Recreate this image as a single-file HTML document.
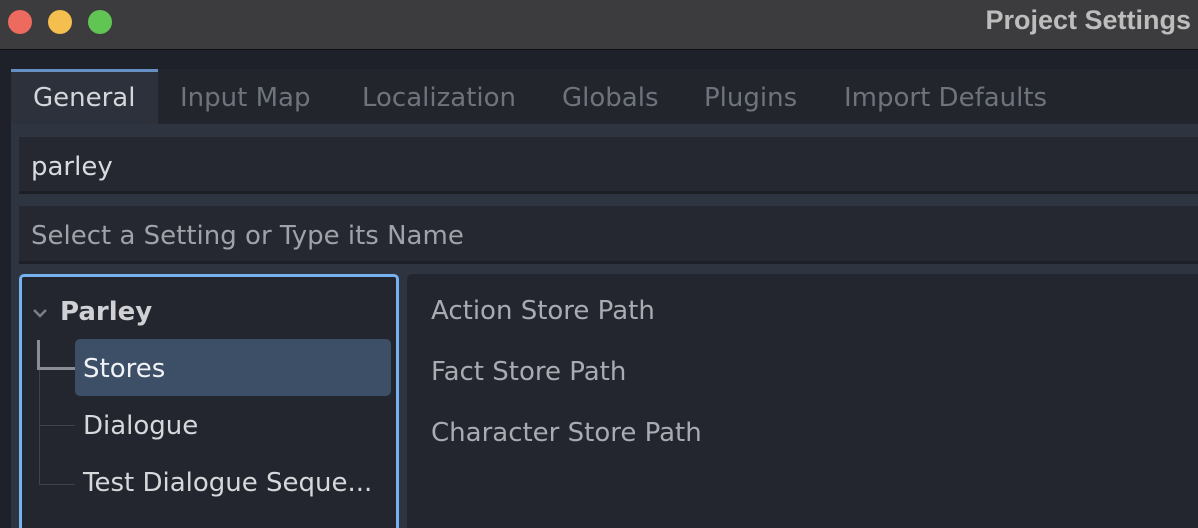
<!DOCTYPE html>
<html><head><meta charset="utf-8"><style>
*{margin:0;padding:0;box-sizing:border-box}
html,body{width:1198px;height:528px;overflow:hidden}
body{background:#1e2129;font-family:"DejaVu Sans","Liberation Sans",sans-serif;position:relative}
.tb{position:absolute;left:0;top:0;width:1198px;height:50px;background:#3c3c3e;border-bottom:1px solid #111}
.dot{position:absolute;top:10px;width:24px;height:24px;border-radius:50%}
.title{position:absolute;right:7px;top:5px;font:bold 27px "Liberation Sans",sans-serif;color:#bdbdbd}
.tabs{position:absolute;left:11px;top:69px;width:1187px;height:55px;background:#22252c}
.tab{position:absolute;top:0;height:55px;line-height:59px;font-size:26px;color:#6e737c;white-space:nowrap}
.tab.a{background:#2c313c;color:#d4d6da;border-top:3px solid #6690c4;line-height:53px;left:0;width:147px;padding-left:22px}
.panel{position:absolute;left:11px;top:124px;width:1187px;height:404px;background:#2e3440}
.f{position:absolute;left:8px;width:1179px;background:#252830;border-bottom:3px solid #1c1f25;font-size:26px;padding-left:12px}
.tree{position:absolute;left:19px;top:274px;width:380px;height:260px;background:#23262e;border:3px solid #76b1f0;border-radius:5px}
.right{position:absolute;left:407px;top:274px;width:800px;height:260px;background:#23262e;border-radius:5px}
.t{position:absolute;font-size:26px;color:#d6d8dc;white-space:nowrap}
.r{position:absolute;left:24px;font-size:26px;color:#a8abb1;white-space:nowrap}
.ln{position:absolute;background:#3e424a}
</style></head><body>
<div class="tb">
<div class="dot" style="left:8px;background:#ed6a5e"></div>
<div class="dot" style="left:48px;background:#f5bf4f"></div>
<div class="dot" style="left:88px;background:#61c554"></div>
<div class="title">Project Settings</div>
</div>
<div class="tabs">
<div class="tab a">General</div>
<div class="tab" style="left:169px">Input Map</div>
<div class="tab" style="left:351px">Localization</div>
<div class="tab" style="left:551px">Globals</div>
<div class="tab" style="left:693px">Plugins</div>
<div class="tab" style="left:833px">Import Defaults</div>
</div>
<div class="panel">
<div class="f" style="top:13px;height:57px;line-height:61px;color:#d8dade">parley</div>
<div class="f" style="top:82px;height:58px;line-height:61px;color:#9fa2a8">Select a Setting or Type its Name</div>
</div>
<div class="tree">
<svg style="position:absolute;left:10px;top:30px" width="16" height="12"><path d="M2 3l6 6 6-6" stroke="#7b7f86" stroke-width="2.5" fill="none"/></svg>
<div class="t" style="left:38px;top:20px;font-weight:bold;color:#cfd1d5">Parley</div>
<div class="ln" style="left:15px;top:63px;width:3px;height:30px;background:#8a8d93"></div>
<div class="ln" style="left:15px;top:90px;width:38px;height:3px;background:#8a8d93"></div>
<div class="ln" style="left:17px;top:93px;width:1px;height:115px"></div>
<div class="ln" style="left:17px;top:148px;width:36px;height:1px"></div>
<div class="ln" style="left:17px;top:207px;width:36px;height:1px"></div>
<div style="position:absolute;left:53px;top:62px;width:316px;height:57px;background:#3c4f66;border-radius:5px"></div>
<div class="t" style="left:61px;top:77px;color:#f0f2f5">Stores</div>
<div class="t" style="left:61px;top:134px">Dialogue</div>
<div class="t" style="left:61px;top:191px">Test Dialogue Seque...</div>
</div>
<div class="right">
<div class="r" style="top:22px">Action Store Path</div>
<div class="r" style="top:83px">Fact Store Path</div>
<div class="r" style="top:144px">Character Store Path</div>
</div>
</body></html>
